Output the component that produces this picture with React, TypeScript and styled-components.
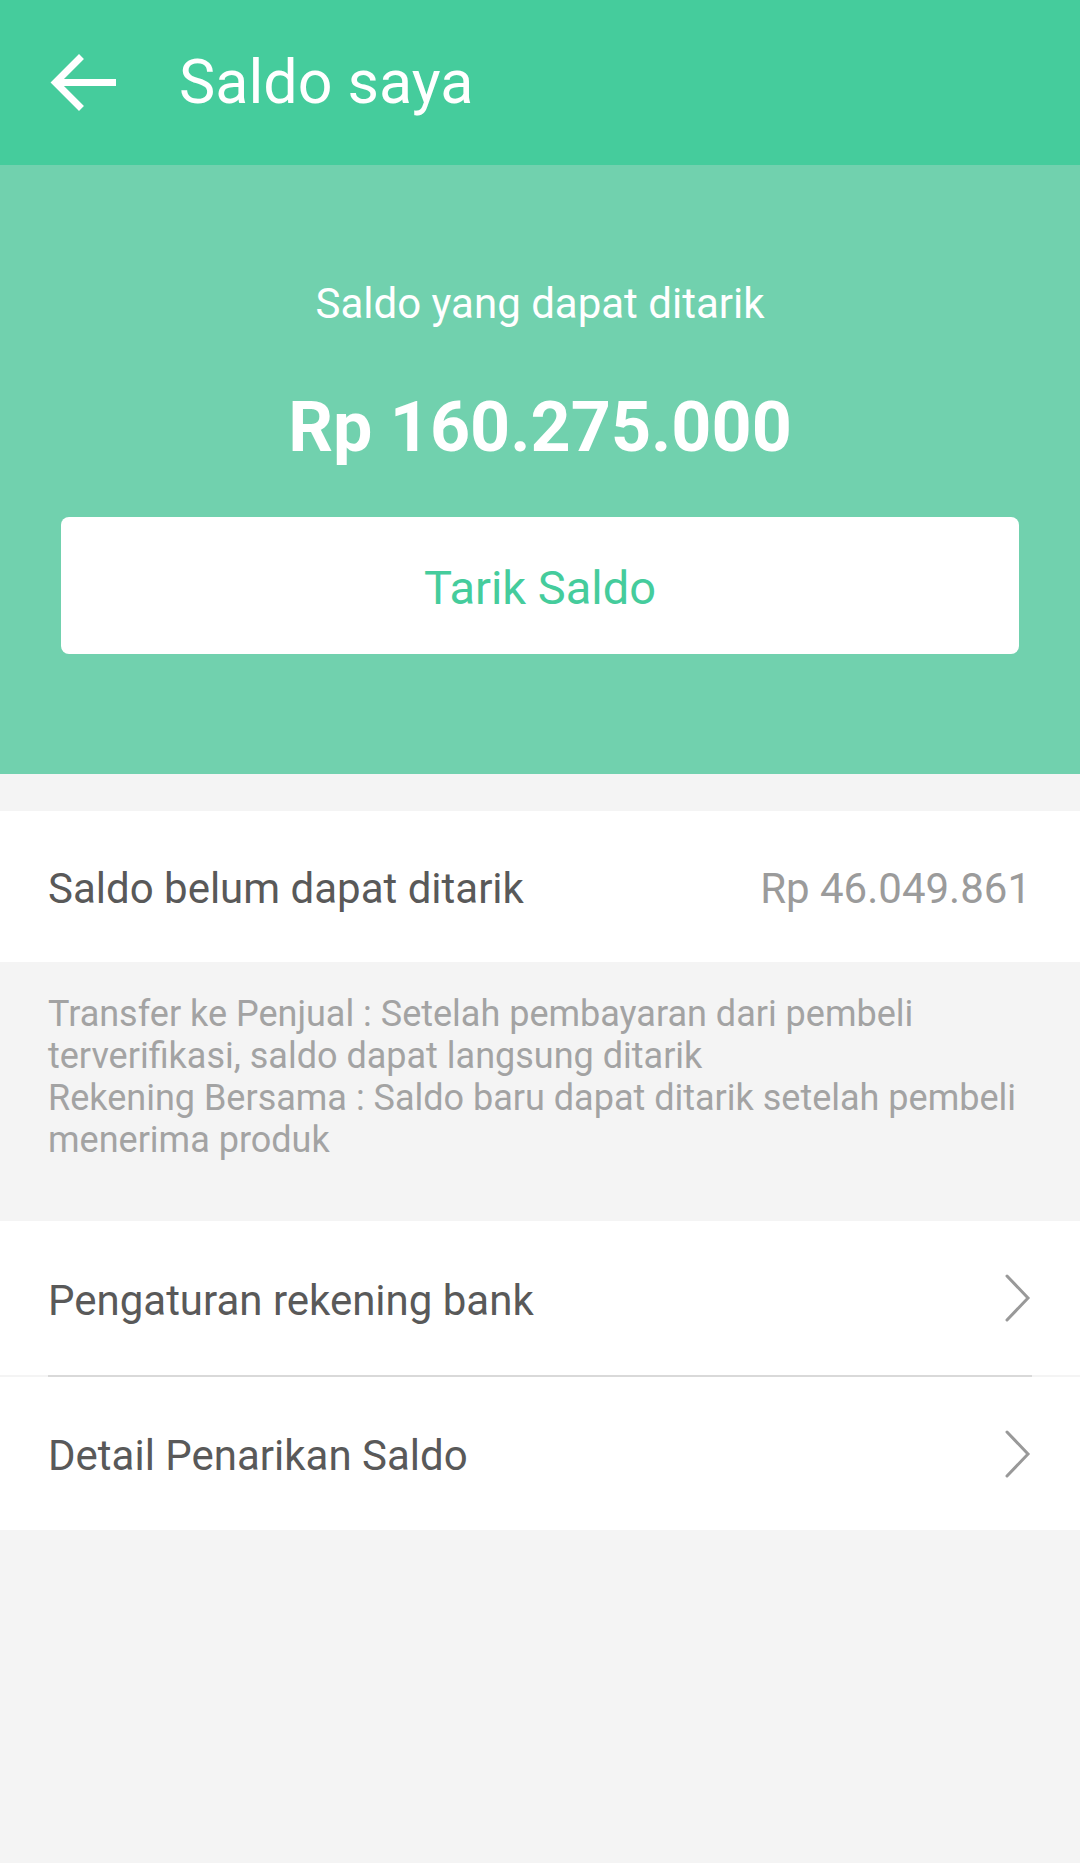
import React from "react";
import styled, { createGlobalStyle } from "styled-components";

const GlobalStyle = createGlobalStyle`
  html, body {
    margin: 0;
    padding: 0;
    background: #f4f4f4;
  }
  body {
    font-family: Roboto, "Noto Sans", "Liberation Sans", sans-serif;
    -webkit-font-smoothing: antialiased;
  }
  * { box-sizing: border-box; }
`;

const Page = styled.div`
  width: 1080px;
  min-height: 1863px;
  background: #f4f4f4;
  display: flex;
  flex-direction: column;
`;

const Header = styled.header`
  height: 165px;
  background: #45cc9c;
  display: flex;
  align-items: center;
  padding-left: 48px;
`;

const BackButton = styled.button`
  background: none;
  border: none;
  padding: 0;
  margin: 0;
  display: flex;
  align-items: center;
  cursor: pointer;
`;

const Title = styled.h1`
  margin: 0 0 0 61px;
  font-size: 61px;
  font-weight: 400;
  color: #ffffff;
  line-height: 1.2;
`;

const Hero = styled.section`
  background: #71d1ae;
  display: flex;
  flex-direction: column;
  align-items: center;
  padding: 114px 61px 120px;
`;

const HeroLabel = styled.div`
  font-size: 42px;
  line-height: 1.2;
  color: #ffffff;
`;

const HeroAmount = styled.div`
  margin-top: 56px;
  font-size: 70px;
  font-weight: 700;
  line-height: 1.2;
  color: #ffffff;
`;

const WithdrawButton = styled.button`
  margin-top: 48px;
  width: 100%;
  height: 137px;
  padding: 4px 0 0;
  border: none;
  border-radius: 8px;
  background: #ffffff;
  color: #45cc9c;
  font-family: inherit;
  font-size: 47px;
  font-weight: 400;
  cursor: pointer;
`;

const Section = styled.div<{ $gap?: number }>`
  margin-top: ${(p) => p.$gap ?? 0}px;
  background: #ffffff;
`;

const Row = styled.div<{ $height: number }>`
  height: ${(p) => p.$height}px;
  display: flex;
  align-items: center;
  justify-content: space-between;
  padding: 0 49px 0 48px;
`;

const RowLabel = styled.span`
  font-size: 42px;
  color: #595959;
  padding-top: 4px;
`;

const RowValue = styled.span`
  font-size: 42px;
  color: #9b9b9b;
  padding-top: 4px;
`;

const Info = styled.div`
  padding: 31px 16px 60px 48px;
  color: #a3a3a3;
  font-size: 36px;
  line-height: 42px;
`;

const InfoLine = styled.p`
  margin: 0;
`;

const Divider = styled.div`
  height: 2px;
  background: #f4f4f4;
  padding: 0 48px;
`;

const DividerLine = styled.div`
  height: 100%;
  background: #d9d9d9;
`;

const ArrowIcon = () => (
  <svg width="70" height="60" viewBox="0 0 70 60" aria-hidden="true">
    <path d="M68 29.5 H9" stroke="#fff" strokeWidth="7" fill="none" />
    <path
      d="M31 6 L7.5 29.5 L31 53"
      stroke="#fff"
      strokeWidth="7"
      fill="none"
      strokeLinecap="square"
    />
  </svg>
);

const Chevron = () => (
  <svg width="26" height="48" viewBox="0 0 26 48" aria-hidden="true">
    <path
      d="M2 2 L23 24 L2 46"
      stroke="#999999"
      strokeWidth="3"
      fill="none"
      strokeLinecap="round"
      strokeLinejoin="miter"
    />
  </svg>
);

export default function App() {
  return (
    <>
      <GlobalStyle />
      <Page>
        <Header>
          <BackButton aria-label="Kembali">
            <ArrowIcon />
          </BackButton>
          <Title>Saldo saya</Title>
        </Header>
        <Hero>
          <HeroLabel>Saldo yang dapat ditarik</HeroLabel>
          <HeroAmount>Rp 160.275.000</HeroAmount>
          <WithdrawButton>Tarik Saldo</WithdrawButton>
        </Hero>
        <Section $gap={37}>
          <Row $height={151}>
            <RowLabel>Saldo belum dapat ditarik</RowLabel>
            <RowValue>Rp 46.049.861</RowValue>
          </Row>
        </Section>
        <Info>
          <InfoLine>
            Transfer ke Penjual : Setelah pembayaran dari pembeli terverifikasi, saldo dapat
            langsung ditarik
          </InfoLine>
          <InfoLine>
            Rekening Bersama : Saldo baru dapat ditarik setelah pembeli menerima produk
          </InfoLine>
        </Info>
        <Section>
          <Row $height={154}>
            <RowLabel>Pengaturan rekening bank</RowLabel>
            <Chevron />
          </Row>
          <Divider>
            <DividerLine />
          </Divider>
          <Row $height={153}>
            <RowLabel>Detail Penarikan Saldo</RowLabel>
            <Chevron />
          </Row>
        </Section>
      </Page>
    </>
  );
}
